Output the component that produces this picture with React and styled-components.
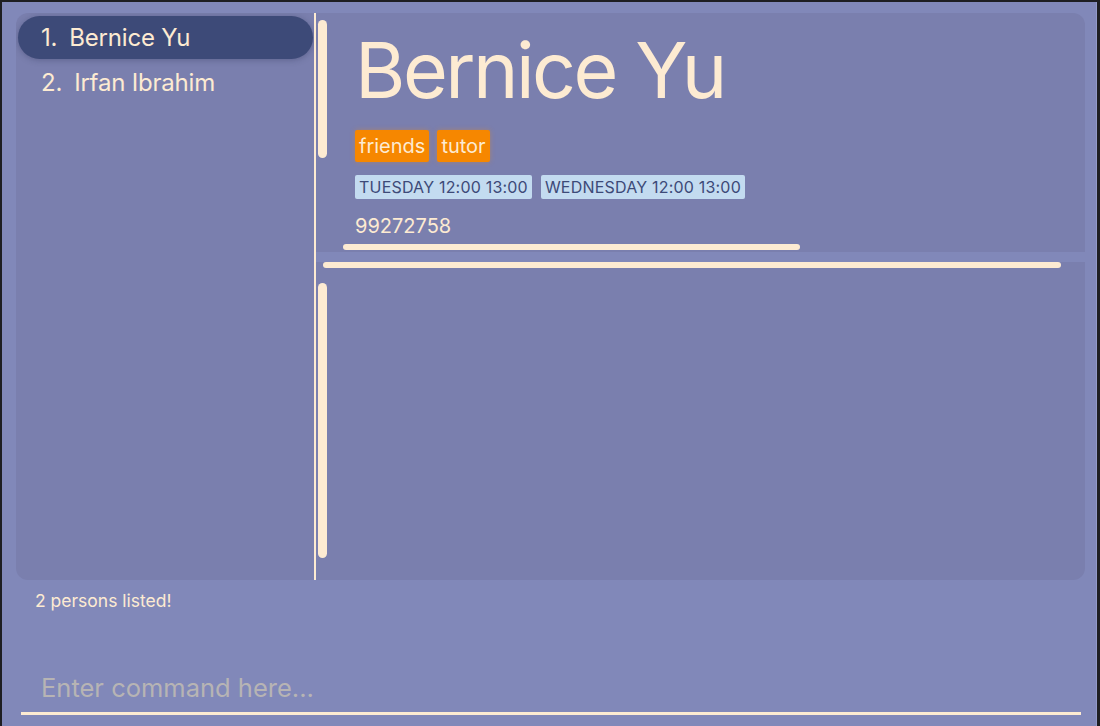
import React from "react";
import styled, { createGlobalStyle } from "styled-components";

const cream = "#fdebd2";

const Global = createGlobalStyle`
  body {
    margin: 0;
    background: #1e1e22;
    font-family: Inter, "Open Sans", sans-serif;
  }
`;

const Window = styled.div`
  margin: 2px 3px 0 2px;
  height: 724px;
  background: #8188b9;
  display: flex;
  flex-direction: column;
  border-right: 1px solid #9299c8;
`;

const Panel = styled.div`
  margin: 11px 11px 0 14px;
  height: 567px;
  background: #7a7fae;
  border-radius: 12px;
  display: flex;
  overflow: hidden;
`;

const ListColumn = styled.div`
  width: 298px;
  padding: 3px 1px 0 2px;
  box-sizing: border-box;
  display: flex;
  flex-direction: column;
`;

const ListItem = styled.div`
  display: flex;
  align-items: center;
  padding-left: 23px;
  border-radius: 22px;
  font-size: 24px;
  color: ${cream};
  letter-spacing: -0.2px;
  background: ${(p) => (p.$active ? "#3d4a78" : "transparent")};
  box-shadow: ${(p) => (p.$active ? "0 1px 6px rgba(40,45,80,0.35)" : "none")};
  height: ${(p) => (p.$active ? "43px" : "44px")};
  margin-bottom: ${(p) => (p.$active ? "1px" : "0")};
`;

const Index = styled.span`
  margin-right: 12px;
`;

const Divider = styled.div`
  width: 2px;
  background: ${cream};
`;

const Detail = styled.div`
  flex: 1;
  display: flex;
  flex-direction: column;
`;

const CardArea = styled.div`
  height: 231px;
  display: flex;
`;

const VThumb = styled.div`
  width: 9px;
  margin: ${(p) => p.$margin};
  height: ${(p) => p.$h}px;
  background: ${cream};
  border-radius: 5px;
  flex-shrink: 0;
`;

const Card = styled.div`
  padding: 18px 0 0 28px;
  display: flex;
  flex-direction: column;
`;

const Name = styled.div`
  font-size: 77px;
  line-height: 78px;
  color: ${cream};
  letter-spacing: -2.5px;
`;

const Row = styled.div`
  display: flex;
  gap: ${(p) => p.$gap}px;
  margin-top: ${(p) => p.$mt}px;
`;

const Tag = styled.span`
  background: #f68700;
  color: ${cream};
  font-size: 20px;
  line-height: 32px;
  padding: 0 4px;
  border-radius: 2px;
  box-shadow: 0 0 5px rgba(246, 135, 0, 0.35);
`;

const Slot = styled.span`
  background: #c3dbf0;
  color: #3d4a78;
  font-size: 16px;
  line-height: 24px;
  padding: 0 4px;
  border-radius: 2px;
  letter-spacing: 0.2px;
`;

const Phone = styled.div`
  margin-top: 15px;
  font-size: 20px;
  color: ${cream};
`;

const HThumb = styled.div`
  height: 6px;
  margin-left: ${(p) => p.$left}px;
  width: ${(p) => p.$w}px;
  background: ${cream};
  border-radius: 3px;
`;

const Band = styled.div`
  height: 10px;
  margin-top: 2px;
  background: #8188b9;
`;

const LowerArea = styled.div`
  flex: 1;
  display: flex;
`;

const Status = styled.div`
  padding: 10px 0 0 33px;
  height: 92px;
  box-sizing: border-box;
  font-size: 17.5px;
  color: ${cream};
`;

const CommandBox = styled.div`
  margin: 0 15px 0 19px;
  border-bottom: 3px solid ${cream};
  padding: 0 0 8px 20px;
  font-size: 25.5px;
  line-height: 32px;
  color: #b7b4b4;
`;

export default function App() {
  return (
    <>
      <Global />
      <Window>
        <Panel>
          <ListColumn>
            <ListItem $active>
              <Index>1.</Index>Bernice Yu
            </ListItem>
            <ListItem>
              <Index>2.</Index>Irfan Ibrahim
            </ListItem>
          </ListColumn>
          <Divider />
          <Detail>
            <CardArea>
              <VThumb $margin="7px 0 0 2px" $h={138} />
              <Card>
                <Name>Bernice Yu</Name>
                <Row $mt={21} $gap={8}>
                  <Tag>friends</Tag>
                  <Tag>tutor</Tag>
                </Row>
                <Row $mt={13} $gap={9}>
                  <Slot>TUESDAY 12:00 13:00</Slot>
                  <Slot>WEDNESDAY 12:00 13:00</Slot>
                </Row>
                <Phone>99272758</Phone>
              </Card>
            </CardArea>
            <HThumb $left={27} $w={457} />
            <Band />
            <HThumb $left={7} $w={738} />
            <LowerArea>
              <VThumb $margin="15px 0 0 2px" $h={275} />
            </LowerArea>
          </Detail>
        </Panel>
        <Status>2 persons listed!</Status>
        <CommandBox>Enter command here...</CommandBox>
      </Window>
    </>
  );
}
